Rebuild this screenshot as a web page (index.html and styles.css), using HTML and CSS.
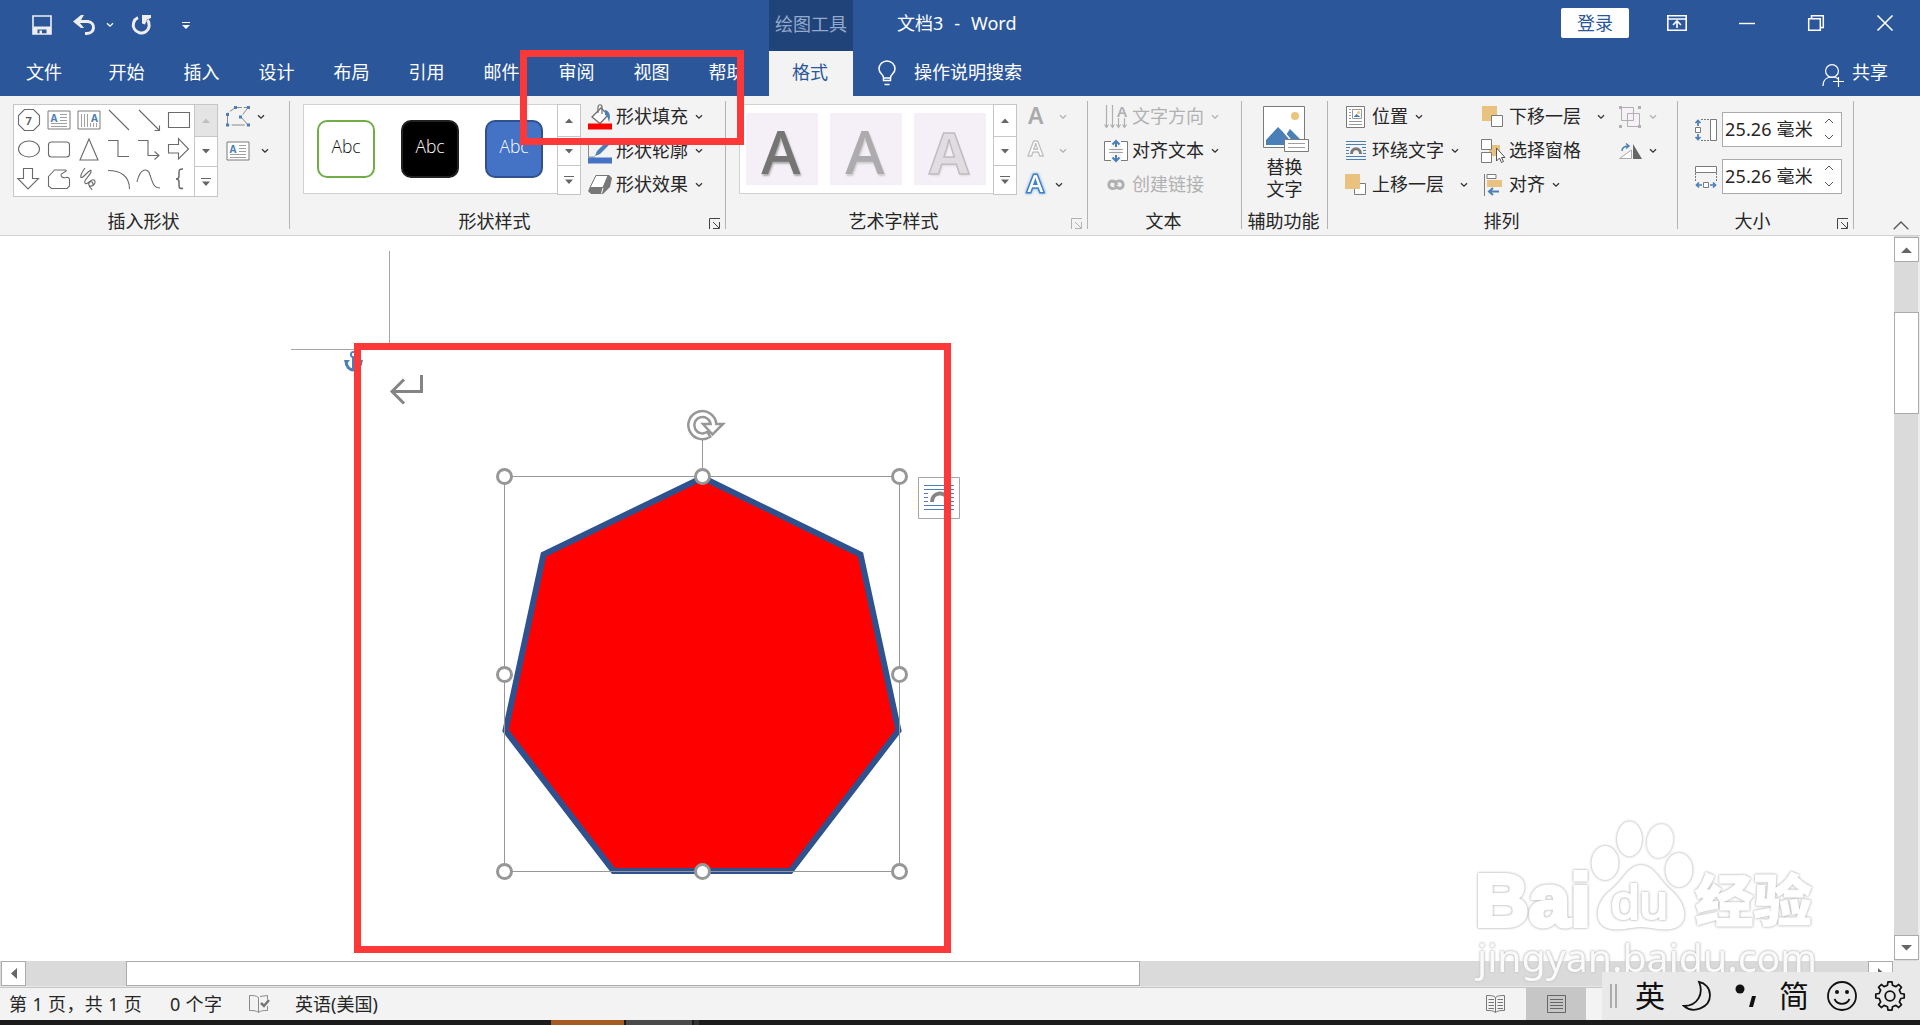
FILE: index.html
```html
<!DOCTYPE html>
<html lang="zh-CN">
<head>
<meta charset="utf-8">
<title>文档3 - Word</title>
<link rel="stylesheet" href="styles.css">
</head>
<body>
<svg class="defs" width="0" height="0">
  <symbol id="chev" viewBox="0 0 8 6"><path d="M1 1.2l3 3 3-3" fill="none" stroke="currentColor" stroke-width="1.3"/></symbol>
  <symbol id="up" viewBox="0 0 8 5"><path d="M0 5l4-4.5L8 5z" fill="currentColor"/></symbol>
  <symbol id="down" viewBox="0 0 8 5"><path d="M0 0h8L4 4.5z" fill="currentColor"/></symbol>
  <symbol id="more" viewBox="0 0 10 8"><path d="M0 0h10v1H0zM1 3.5h8L5 8z" fill="currentColor"/></symbol>
  <symbol id="launch" viewBox="0 0 12 11"><path d="M.5 11V.5H11M4 4l6 6M10.500 4v6.500H4" fill="none" stroke="currentColor"/></symbol>
  <symbol id="textbox" viewBox="0 0 24 20"><path d="M1 1h22v18H1z" fill="#fff" stroke="#7b7b7b"/><path d="M13 4.500h7M13 7.500h7M13 10.500h7M4 13.500h16M4 16.500h16" stroke="#a0a0a0"/><text x="3.500" y="11.500" class="ic-a">A</text></symbol>
</svg>
<div class="window">
  <header class="titlebar">
    <div class="quick">
      <svg class="save" width="20" height="20" viewBox="0 0 20 20"><path d="M1 1h18v18H1z" fill="none" stroke="#eee" stroke-width="1.6"/><path d="M1 11.500h18V19h-4.500v-4.500h-9V19H1z" fill="#eee"/><path d="M7.500 15.500H10V19H7.500z" fill="#eee"/></svg>
      <svg class="undo" width="23" height="20" viewBox="0 0 23 20"><path d="M3 6.500h12c8 1 7 12-1 12h-2" fill="none" stroke="#eee" stroke-width="3"/><path d="M8 0v0L0 6.500 8 13h3L6.500 7.500 11 0z" fill="#eee"/></svg>
      <svg class="undo-more" width="8" height="6"><use href="#chev"/></svg>
      <svg class="redo" width="21" height="20" viewBox="0 0 21 20"><path d="M7 2.700A8 8 0 1 0 16.500 5" fill="none" stroke="#eee" stroke-width="3"/><path d="M11 0h9v3l-4 1.500-2 5-3-1z" fill="#eee"/></svg>
      <svg class="custom" width="8" height="7" viewBox="0 0 8 7"><path d="M0 0h8v1H0zM0 3h8L4 7z" fill="#fff"/></svg>
    </div>
    <div class="context">绘图工具</div>
    <div class="doc-title"><span>文档3</span><span>-</span><span>Word</span></div>
    <div class="win">
      <span class="login">登录</span>
      <svg class="w1" width="20" height="16" viewBox="0 0 20 16"><path d="M.8.8h18.400v14.400H.8zM.8 4h18.400M10 13V6.500M6 10l4-4 4 4" fill="none" stroke="#fff" stroke-width="1.600"/></svg>
      <svg class="w2" width="16" height="16"><path d="M0 8.500h16" stroke="#fff" stroke-width="1.400"/></svg>
      <svg class="w3" width="16" height="16"><path d="M.7 3.700h11.600v11.600H.7zM3.500 3.500V.7h11.800v11.800h-3" fill="none" stroke="#fff" stroke-width="1.500"/></svg>
      <svg class="w4" width="16" height="16"><path d="M.5.5l15 15M15.500.5l-15 15" stroke="#fff" stroke-width="1.600"/></svg>
    </div>
  </header>
  <nav class="tabs">
    <span class="file">文件</span><span>开始</span><span>插入</span><span>设计</span><span>布局</span><span>引用</span><span>邮件</span><span>审阅</span><span>视图</span><span>帮助</span>
    <span class="active">格式</span>
    <svg class="bulb" width="18" height="25" viewBox="0 0 18 25"><path d="M5.500 17c0-4-4.500-4.500-4.500-9a8 8 0 0 1 16 0c0 4.500-4.500 5-4.500 9v2.500h-7zM5.500 17h7M6.500 23.500h5" fill="none" stroke="#fff" stroke-width="1.500"/></svg>
    <span class="search">操作说明搜索</span>
    <span class="share"><svg width="22" height="24" viewBox="0 0 22 24"><path d="M1 22c0-6 4-9 9-9s5 1 6 2M16.500 13v10M11 17.500h11" fill="none" stroke="#fff" stroke-width="1.200"/><circle cx="10" cy="7" r="6.400" fill="none" stroke="#fff" stroke-width="1.200"/></svg>共享</span>
  </nav>

  <section class="ribbon">
    <div class="group g1">
      <div class="body">
        <div class="shapes">
          <div class="shape-grid">
            <svg class="sh" viewBox="0 0 24 24"><path d="M7.500 1.500h9l6 6v9l-6 6h-9l-6-6v-9z"/><text x="8.500" y="16.500" class="seven">7</text></svg>
            <svg width="24" height="20"><use href="#textbox"/></svg>
            <svg width="24" height="20" viewBox="0 0 24 20"><path d="M1 1h22v18H1z" fill="#fff" stroke="#7b7b7b"/><path d="M4.500 4v13M7.500 4v13M10.500 4v13M13.500 13v4M16.500 13v4M19.500 13v4" stroke="#a0a0a0"/><text x="14" y="11.500" class="ic-a">A</text></svg>
            <svg class="sh" viewBox="0 0 24 24"><path d="M2 2l20 20"/></svg>
            <svg class="sh" viewBox="0 0 24 24"><path d="M2 2l20 20M22.500 17.500v5h-5"/></svg>
            <svg class="sh" viewBox="0 0 24 24"><path d="M1.500 4.500h21v15h-21z"/></svg>
            <svg class="sh" viewBox="0 0 24 24"><ellipse cx="12" cy="12" rx="10.500" ry="8"/></svg>
            <svg class="sh" viewBox="0 0 24 24"><rect x="1.500" y="5" width="21" height="15" rx="3"/></svg>
            <svg class="sh" viewBox="0 0 24 24"><path d="M12 2l9 21H3z"/></svg>
            <svg class="sh" viewBox="0 0 24 24"><path d="M1 3.500h10v16h11"/></svg>
            <svg class="sh" viewBox="0 0 24 24"><path d="M1 3.500h10v15h11M17.500 14.500l4.500 4-4.500 4"/></svg>
            <svg class="sh" viewBox="0 0 24 24"><path d="M1.500 7.500h10v-6l10 10.500-10 10v-6h-10z"/></svg>
            <svg class="sh" viewBox="0 0 24 24"><path d="M6.500 1.500h9v10h6L11 22 .8 11.500h5.700z"/></svg>
            <svg class="sh" viewBox="0 0 24 24"><path d="M1.500 9.500l6-6.500h11c3 1.500-4.500 2.500-4.500 5s3 3 5 2.500 3.500.5 3.500 2v6.500l-2.500 2.500h-15.500l-3-2.500z"/></svg>
            <svg class="sh" viewBox="0 0 24 24"><path d="M8 1c-6 8-5 12-1 8s8-8 7-4-8 8-6 11 6-5 9-3-1 7-4 6 0-6 2-4 1 5-2 4M12 18c0 3 3 3 3 5"/></svg>
            <svg class="sh" viewBox="0 0 24 24"><path d="M1 3.500c12 0 21.500 5 21.500 18.500"/></svg>
            <svg class="sh" viewBox="0 0 24 24"><path d="M0 15c3-14 11-15 13-7 3 9 4 13 10 13"/></svg>
            <svg class="sh brace" viewBox="0 0 24 24"><path d="M16 2c-4 0-4 1-4 4v3c0 2-1 3-3 3 2 0 3 1 3 3v3c0 3 0 3.500 4 3.500"/></svg>
          </div>
          <div class="scroll"><i class="off"><svg width="8" height="5"><use href="#up"/></svg></i><i><svg width="8" height="5"><use href="#down"/></svg></i><i><svg width="10" height="8"><use href="#more"/></svg></i></div>
        </div>
        <div class="col edit">
          <div class="row"><svg width="24" height="22" viewBox="0 0 24 22"><path d="M1.500 19V7l8-5.500H22L15 11l7 8z" fill="none" stroke="#8a8a8a" stroke-dasharray="13 2"/><path d="M8 0h3v3H8zM21 0h3v3h-3zM0 7h3v3H0zM13 9.500h3v3h-3zM0 17.500h3v3H0zM21 17.500h3v3h-3z" fill="#4a7fb8"/></svg><svg class="cv" width="8" height="6"><use href="#chev"/></svg></div>
          <div class="row"><svg width="24" height="20"><use href="#textbox"/></svg><svg class="cv far" width="8" height="6"><use href="#chev"/></svg></div>
        </div>
      </div>
      <div class="label"><span>插入形状</span></div>
    </div>
    <div class="sep"></div>
    <div class="group g2">
      <div class="body">
        <div class="gallery styles"><b class="s-green">Abc</b><b class="s-black">Abc</b><b class="s-blue">Abc</b></div>
        <div class="scroll"><i><svg width="8" height="5"><use href="#up"/></svg></i><i><svg width="8" height="5"><use href="#down"/></svg></i><i><svg width="10" height="8"><use href="#more"/></svg></i></div>
        <div class="col fills">
          <div class="row"><svg width="24" height="26" viewBox="0 0 24 26"><path d="M4 13l9-9 7 7-8 8.500z" fill="#fff" stroke="#707070" stroke-width="1.300"/><path d="M10 9V3c0-3 4-3 4 0v7" fill="none" stroke="#707070" stroke-width="1.200"/><path d="M17 6c5 1 6 6 4 12-1-3-1-6-4-7z" fill="#4a7fb8"/><path d="M0 19.500h24v6H0z" fill="red"/></svg><span>形状填充</span><svg class="cv" width="8" height="6"><use href="#chev"/></svg></div>
          <div class="row"><svg width="24" height="26" viewBox="0 0 24 26"><path d="M.5 2v17H7M.5 5H14" fill="none" stroke="#8a8a8a"/><path d="M7 18l2-5L20 2l3 3-11 11z" fill="#4a7fb8"/><path d="M0 19.500h24v6H0z" fill="#4472c4"/></svg><span>形状轮廓</span><svg class="cv" width="8" height="6"><use href="#chev"/></svg></div>
          <div class="row"><svg width="24" height="22" viewBox="0 0 24 22"><path d="M8 1h13l3 3-2 9-7 7H3l-3-3z" fill="#777"/><path d="M8 1.500h12l-5 12H2z" fill="#fff" stroke="#777"/><path d="M15 14l-1.500 5.500" stroke="#fff"/></svg><span>形状效果</span><svg class="cv" width="8" height="6"><use href="#chev"/></svg></div>
        </div>
      </div>
      <div class="label"><span>形状样式</span><svg class="launcher" width="12" height="11"><use href="#launch"/></svg></div>
    </div>
    <div class="sep"></div>
    <div class="group g3">
      <div class="body">
        <div class="gallery arts"><b class="a1">A</b><b class="a2">A</b><b class="a3">A</b></div>
        <div class="scroll"><i><svg width="8" height="5"><use href="#up"/></svg></i><i><svg width="8" height="5"><use href="#down"/></svg></i><i><svg width="10" height="8"><use href="#more"/></svg></i></div>
        <div class="col letters">
          <div class="row dim"><b class="l1">A</b><svg class="cv" width="8" height="6"><use href="#chev"/></svg></div>
          <div class="row dim"><svg class="glyph" width="17" height="24"><text x="0" y="18" class="l2">A</text></svg><svg class="cv" width="8" height="6"><use href="#chev"/></svg></div>
          <div class="row"><svg class="glyph" width="17" height="24"><text x="-.5" y="20" class="l3">A</text></svg><svg class="cv near" width="8" height="6"><use href="#chev"/></svg></div>
        </div>
      </div>
      <div class="label"><span>艺术字样式</span><svg class="launcher dim" width="12" height="11"><use href="#launch"/></svg></div>
    </div>
    <div class="sep"></div>
    <div class="group g4">
      <div class="body">
        <div class="col">
          <div class="row dim"><svg width="24" height="24" viewBox="0 0 24 24"><path d="M2.500 0v22M8.500 0v22M14.500 13v9M20.500 13v9M.5 19.500l2 3 2-3M6.500 19.500l2 3 2-3M12.500 19.500l2 3 2-3M18.500 19.500l2 3 2-3" fill="none" stroke="#b0b0b0" stroke-width="1.200"/><text x="13" y="12" class="dir-a">A</text></svg><span>文字方向</span><svg class="cv" width="8" height="6"><use href="#chev"/></svg></div>
          <div class="row"><svg width="24" height="24" viewBox="0 0 24 24"><path d="M7 2.500H.5v19H7M17 2.500h6.500v19H17" fill="#fff" stroke="#7b7b7b"/><path d="M5 10.500h14M5 13.500h14" stroke="#a0a0a0"/><path d="M12 8V2M8.500 5.500L12 2l3.500 3.500M12 16v6M8.500 18.500L12 22l3.500-3.500" fill="none" stroke="#4a7fb8" stroke-width="2"/></svg><span>对齐文本</span><svg class="cv" width="8" height="6"><use href="#chev"/></svg></div>
          <div class="row dim"><svg width="24" height="24" viewBox="0 0 24 24"><g fill="none" stroke="#b0b0b0" stroke-width="2.800"><path d="M13.500 13.500c-2 2.500-4 2-5.500 2a3.800 3.800 0 0 1 0-7.500c3 0 4 1.500 5 4M10.500 10c2-2.500 4-2 5.500-2a3.800 3.800 0 0 1 0 7.500c-3 0-4-1.500-5-4"/></g></svg><span>创建链接</span></div>
        </div>
      </div>
      <div class="label"><span>文本</span></div>
    </div>
    <div class="sep"></div>
    <div class="group g5">
      <div class="body big">
        <svg width="46" height="46" viewBox="0 0 46 46"><path d="M.5.5h41v41H.5z" fill="#fff" stroke="#7b7b7b"/><circle cx="32" cy="10" r="4" fill="#ecc57b"/><path d="M3 39V34L15 21l8 8 4-6 15 15v1z" fill="#4a7fb8"/><path d="M21 26l10 12" stroke="#fff" stroke-width="1.500"/><path d="M21.500 33.500h24v12h-24z" fill="#fff" stroke="#7b7b7b"/><path d="M25 37.500h17M25 41.500h17" stroke="#a0a0a0"/></svg>
        <span>替换<br>文字</span>
      </div>
      <div class="label"><span>辅助功能</span></div>
    </div>
    <div class="sep"></div>
    <div class="group g6">
      <div class="body">
        <div class="col c1">
          <div class="row"><svg width="22" height="24" viewBox="0 0 22 24"><path d="M1.500 1.500h18v21h-18z" fill="#fff" stroke="#7b7b7b"/><path d="M7.500 4.500h9v9h-9z" fill="#fff" stroke="#999"/><path d="M8.500 12l3-3 4 3z" fill="#4a7fb8"/><circle cx="13.500" cy="7.500" r="1.500" fill="#ecc57b"/><path d="M4 4.500h2M4 7.500h2M4 10.500h2M4 13.500h2M4 16.500h13M4 19.500h13" stroke="#999"/></svg><span>位置</span><svg class="cv" width="8" height="6"><use href="#chev"/></svg></div>
          <div class="row"><svg width="22" height="20" viewBox="0 0 22 20"><path d="M1 .5h20M1 3.500h20M1 6.500h4M17 6.500h4M1 9.500h3M18 9.500h3M1 12.500h3M18 12.500h3M1 15.500h20M1 18.500h20" stroke="#4a7fb8"/><path d="M6.500 13c0-7 9-7 9 0" fill="none" stroke="#777" stroke-width="3"/></svg><span>环绕文字</span><svg class="cv" width="8" height="6"><use href="#chev"/></svg></div>
          <div class="row"><svg width="22" height="22" viewBox="0 0 22 22"><path d="M9.500 9.500h11v11h-11z" fill="#fff" stroke="#7b7b7b"/><path d="M0 0h15v15H0z" fill="#e9c280"/></svg><span>上移一层</span><svg class="cv split" width="8" height="6"><use href="#chev"/></svg></div>
        </div>
        <div class="col c2">
          <div class="row"><svg width="22" height="22" viewBox="0 0 22 22"><path d="M1 0h15v15H1z" fill="#e9c280"/><path d="M10.500 9.500h11v11h-11z" fill="#fff" stroke="#7b7b7b"/></svg><span>下移一层</span><svg class="cv split" width="8" height="6"><use href="#chev"/></svg></div>
          <div class="row"><svg width="24" height="24" viewBox="0 0 24 24"><path d="M8 6h11v11H8z" fill="#e9c280"/><path d="M.5.5h10v10H.5zM.5 13.500h10v10H.5z" fill="#fff" stroke="#7b7b7b"/><path d="M15.500 9v13l3-3 2 4.500 2-1-2-4h3.500z" fill="#fff" stroke="#555"/></svg><span>选择窗格</span></div>
          <div class="row"><svg width="22" height="22" viewBox="0 0 22 22"><path d="M3.500 0v22M6 .5h9v4H6z" fill="#fff" stroke="#7b7b7b"/><path d="M6 6h15v7H6z" fill="#e9c280"/><path d="M18 17.500H8M12 14l-4 3.500 4 3.500" fill="none" stroke="#4a7fb8" stroke-width="2"/></svg><span>对齐</span><svg class="cv" width="8" height="6"><use href="#chev"/></svg></div>
        </div>
        <div class="col c3">
          <div class="row dim"><svg width="24" height="22" viewBox="0 0 24 22"><path d="M3.500 1.500h12v13h-12zM9.500 7.500h12v13h-12z" fill="#f5eff7" fill-opacity=".7" stroke="#b0b0b0"/><path d="M1 0h3v3H1zM20 0h3v3h-3zM1 19h3v3H1zM20 19h3v3h-3z" fill="#b0b0b0"/></svg><svg class="cv" width="8" height="6"><use href="#chev"/></svg></div>
          <div class="row"><svg width="24" height="16" viewBox="0 0 24 16"><path d="M13.500 7v8.500H1.500z" fill="#fff" stroke="#aaa"/><path d="M15 1l9 15h-9z" fill="#666"/><path d="M4 8c0-4 3-5 7-5M8 .5L11 3 8 5.500" fill="none" stroke="#4a7fb8" stroke-width="1.500"/></svg><svg class="cv" width="8" height="6"><use href="#chev"/></svg></div>
        </div>
      </div>
      <div class="label"><span>排列</span></div>
    </div>
    <div class="sep"></div>
    <div class="group g7">
      <div class="body sizes">
        <div class="size"><svg width="22" height="22" viewBox="0 0 22 22"><path d="M15.500.5h6v21h-6zM.5 8.500h5v5h-5z" fill="#fff" stroke="#7b7b7b"/><path d="M6 .5h9M6 21.500h9" stroke="#7b7b7b" stroke-dasharray="2 1"/><path d="M3 7V1M.5 4L3 1.500 5.500 4M3 15v6M.5 18L3 20.500 5.500 18" fill="none" stroke="#4a7fb8" stroke-width="1.700"/></svg><div class="input"><span>25.26 毫米</span><em><svg width="10" height="6" viewBox="0 0 10 6"><path d="M1 5l4-4 4 4" fill="none" stroke="#555"/></svg><svg width="10" height="6" viewBox="0 0 10 6"><path d="M1 1l4 4 4-4" fill="none" stroke="#555"/></svg></em></div></div>
        <div class="size"><svg width="22" height="22" viewBox="0 0 22 22"><path d="M.5.5h21v6H.5zM8.500 16.500h5v5h-5z" fill="#fff" stroke="#7b7b7b"/><path d="M.5 7v9M21.500 7v9" stroke="#7b7b7b" stroke-dasharray="2 1"/><path d="M7 19H1M4 16.500L1.500 19 4 21.500M15 19h6M18 16.500l2.500 2.500-2.500 2.500" fill="none" stroke="#4a7fb8" stroke-width="1.700"/></svg><div class="input"><span>25.26 毫米</span><em><svg width="10" height="6" viewBox="0 0 10 6"><path d="M1 5l4-4 4 4" fill="none" stroke="#555"/></svg><svg width="10" height="6" viewBox="0 0 10 6"><path d="M1 1l4 4 4-4" fill="none" stroke="#555"/></svg></em></div></div>
      </div>
      <div class="label"><span>大小</span><svg class="launcher" width="12" height="11"><use href="#launch"/></svg></div>
    </div>
    <div class="sep"></div>
    <svg class="collapse" width="16" height="9" viewBox="0 0 16 9"><path d="M.7 8.300L8 1l7.300 7.300" fill="none" stroke="#555" stroke-width="1.300"/></svg>
  </section>

  <main class="work">
    <svg class="page" width="1894" height="725" viewBox="0 236 1894 725">
      <path d="M389.500 251v98M291 349.500h98" stroke="#a6a6a6"/>
      <g fill="none" stroke="#4a7fb8"><circle cx="353.500" cy="354.500" r="2.600" stroke-width="1.800"/><path d="M353.500 357v14" stroke-width="3"/><path d="M346 361c0 12 15 12 15 0" stroke-width="3"/></g><path d="M344 360h6l-4 5zM363 360h-6l4 5z" fill="#4a7fb8"/>
      <path d="M421.500 375v16.500H392M404 379.500l-12 12 12 12" fill="none" stroke="#848484" stroke-width="3"/>
      <path d="M702.500 477.500L860.500 554.500 898.500 730.500 790.500 871H613.500L505.500 730.500 543.500 554.500z" fill="red" stroke="#2f528f" stroke-width="6"/>
      <path d="M504.500 476.500h395v395h-395zM702.500 440v36" fill="none" stroke="#979797"/>
      <path d="M710.200 436.700A14 14 0 1 1 716.300 424H723l-10.500 10.500-9.500-10.500h7.600a8.200 8.200 0 1 0-3.300 7.800z" fill="#fff" stroke="#979797" stroke-width="2.500"/>
      <g fill="#fff" stroke="#979797" stroke-width="3"><circle cx="504.500" cy="476.500" r="7"/><circle cx="702.500" cy="476.500" r="7"/><circle cx="899.500" cy="476.500" r="7"/><circle cx="504.500" cy="674.500" r="7"/><circle cx="899.500" cy="674.500" r="7"/><circle cx="504.500" cy="871.500" r="7"/><circle cx="702.500" cy="871.500" r="7"/><circle cx="899.500" cy="871.500" r="7"/></g>
      <path d="M918.500 477.500h41v41h-41z" fill="#fff" stroke="#a6a6a6"/>
      <path d="M924 485.500h30M924 489.500h30M924 493.500h4M950 493.500h4M924 497.500h4M950 497.500h4M924 501.500h4M950 501.500h4M924 505.500h30M924 509.500h30" stroke="#4a7fb8"/>
      <path d="M932 502c0-10 12-11 15-4" fill="none" stroke="#848484" stroke-width="4"/>
    </svg>
    <div class="vscroll">
      <i class="btn"><svg width="11" height="6" viewBox="0 0 8 5" preserveAspectRatio="none"><use href="#up"/></svg></i>
      <i class="thumb"></i>
      <i class="btn"><svg width="11" height="6" viewBox="0 0 8 5" preserveAspectRatio="none"><use href="#down"/></svg></i>
    </div>
  </main>
  <div class="hscroll">
    <i class="btn"><svg width="6" height="11"><path d="M6 0v11L0 5.500z" fill="#666"/></svg></i>
    <i class="thumb"></i>
    <i class="btn"><svg width="6" height="11"><path d="M0 0v11l6-5.500z" fill="#666"/></svg></i>
    <b class="corner"></b>
  </div>
  <footer class="status">
    <span class="pg">第 1 页，共 1 页</span><span class="wc">0 个字</span>
    <svg class="proof" width="21" height="18" viewBox="0 0 21 18"><path d="M9.500 2.500c-2-2-6-2-9-2v15c3 0 7 0 9 2 2-2 5-2 9-2V11M9.500 2.500v15M11 1.500l7.500-1v4" fill="none" stroke="#8a8a8a"/><path d="M12 8l3 3 5-6" fill="none" stroke="#777" stroke-width="2.500"/></svg>
    <span class="lang">英语(美国)</span>
    <div class="views">
      <svg width="20" height="18" viewBox="0 0 20 18"><path d="M9.500 2.500C8 .5 4 .5.5.5v15c3.500 0 7 0 9 2 2-2 5.500-2 9-2V.5c-3.500 0-7 0-9 2v15M2.500 4.500H8M2.500 7.500H8M2.500 10.500H8M2.500 13.500H8M11.500 4.500H17M11.500 7.500H17M11.500 10.500H17M11.500 13.500H17" fill="none" stroke="#777"/></svg>
      <div class="on"><svg width="19" height="18" viewBox="0 0 19 18"><path d="M.5.5h18v17H.5zM3 4.500h13M3 7.500h13M3 10.500h13M3 13.500h13" fill="none" stroke="#666"/></svg></div>
    </div>
  </footer>
  <div class="taskbar"><i class="t1"></i><i class="t2"></i><i class="t3"></i></div>
</div>

<svg class="watermark" width="370" height="190" viewBox="1460 810 370 190">
  <g class="wm">
    <text x="1475" y="926" class="wm-bai" textLength="116" lengthAdjust="spacingAndGlyphs">Bai</text>
    <ellipse cx="1605" cy="863" rx="13.500" ry="17"/><ellipse cx="1629.500" cy="839" rx="12.500" ry="17.500"/><ellipse cx="1660" cy="841" rx="13" ry="17" transform="rotate(12 1660 841)"/><ellipse cx="1679" cy="870" rx="13.500" ry="17"/>
    <path d="M1641 865c13 0 18 15 30 25 16 14 18 33 4 38-12 4-24-1-34-1s-22 5-34 1c-14-5-12-26 4-38 12-9 17-25 30-25z"/>
    <text x="1611" y="919" class="wm-du" textLength="57" lengthAdjust="spacingAndGlyphs">du</text>
    <text x="1695" y="921" class="wm-jy" textLength="117" lengthAdjust="spacingAndGlyphs">经验</text>
    <text x="1477" y="972" class="wm-url" textLength="340" lengthAdjust="spacingAndGlyphs">jingyan.baidu.com</text>
  </g>
</svg>

<div class="ime">
  <svg class="grip" width="8" height="24"><path d="M1 0v24M6 0v24" stroke="#999" stroke-width="1.500"/></svg>
  <span>英</span>
  <svg class="moon" width="30" height="32" viewBox="0 0 30 32"><path d="M17 2c5 11-1 24-15 24 9 8 26 2 26-11 0-7-5-12-11-13z" fill="none" stroke="#111" stroke-width="1.800"/></svg>
  <svg class="punct" width="22" height="24" viewBox="0 0 22 24"><circle cx="5" cy="5" r="4.500" fill="#111"/><path d="M17 12h4l-3 11h-4z" fill="#111"/></svg>
  <span class="jian">简</span>
  <svg class="smile" width="32" height="32" viewBox="0 0 32 32"><circle cx="16" cy="16" r="14" fill="none" stroke="#111" stroke-width="1.800"/><circle cx="11" cy="12" r="2" fill="#111"/><circle cx="21" cy="12" r="2" fill="#111"/><path d="M8.500 19c3 6.500 12 6.500 15 0" fill="none" stroke="#111" stroke-width="1.800"/></svg>
  <svg class="gear" width="32" height="32" viewBox="0 0 32 32"><path d="M13.500 5.200L14 1.800h4l.5 3.400 3.400 1.400 2.800-2.100 2.800 2.800-2.100 2.800 1.400 3.400 3.400.5v4l-3.400.5-1.400 3.400 2.100 2.800-2.800 2.800-2.800-2.100-3.400 1.400-.5 3.400h-4l-.5-3.400-3.400-1.400-2.800 2.100-2.800-2.800 2.100-2.800-1.400-3.400-3.400-.5v-4l3.400-.5 1.400-3.400-2.100-2.800 2.800-2.800 2.800 2.100z" fill="none" stroke="#111" stroke-width="1.700" stroke-linejoin="round"/><circle cx="16" cy="16" r="4.800" fill="none" stroke="#111" stroke-width="1.800"/></svg>
</div>
<div class="mark mark-ribbon"></div>
<div class="mark mark-canvas"></div>
</body>
</html>
```
FILE: styles.css
```css
* { box-sizing: border-box; }
body { margin: 0; overflow: hidden; font: 18px/34px "Noto Sans", "Noto Sans CJK SC", sans-serif; color: #262626; }
svg { display: block; flex: none; overflow: visible; }
i, em, b { font-style: normal; font-weight: 400; }
.defs { position: absolute; }
.window { width: 1920px; height: 1025px; display: flex; flex-direction: column; background: #fff; white-space: nowrap; }

/* title bar */
.titlebar { height: 51px; display: flex; background: #2b579a; color: #fff; line-height: 48px; }
.quick { width: 769px; display: flex; align-items: flex-start; padding: 15px 0 0 32px; }
.undo { margin-left: 21px; }
.undo-more { margin: 7px 0 0 10px; }
.redo { margin-left: 17px; }
.custom { margin: 7px 0 0 30px; }
.context { width: 84px; background: #204379; color: #94a9cb; text-align: center; }
.doc-title { padding-left: 44px; line-height: 46px; width: 708px; display: flex; gap: 11px; }
.win { display: flex; padding-top: 8px; }
.login { width: 68px; height: 30px; border-radius: 2px; background: #fff; color: #2b579a; line-height: 31px; text-align: center; }
.w1 { margin: 7px 0 0 38px; }
.w2 { margin: 7px 0 0 52px; }
.w3 { margin: 7px 0 0 53px; }
.w4 { margin: 7px 0 0 53px; }

/* ribbon tabs */
.tabs { height: 45px; display: flex; background: #2b579a; color: #fff; line-height: 43px; }
.tabs > span { width: 75px; text-align: center; }
.tabs > .file { width: 89px; padding-right: 1px; }
.tabs > .active { width: 84px; margin-left: 5px; padding-right: 2px; background: #f3f3f3; color: #2b579a; }
.bulb { margin: 10px 0 0 25px; }
.tabs > .search { width: 110px; margin-left: 17px; }
.tabs > .share { width: auto; margin: 0 32px 0 auto; display: flex; gap: 8px; }
.share svg { margin-top: 13px; }

/* ribbon */
.ribbon { height: 140px; display: flex; background: #f3f3f3; border-bottom: 1px solid #d2d2d2; }
.sep { width: 1px; margin: 5px 0 6px; background: #b4b4b4; }
.group { display: flex; flex-direction: column; }
.g1 { width: 289px; } .g2 { width: 435px; } .g3 { width: 361px; } .g4 { width: 153px; }
.g5 { width: 85px; } .g6 { width: 349px; } .g7 { width: 175px; }
.body { height: 112px; display: flex; }
.label { height: 27px; line-height: 27px; display: flex; }
.label span { flex: 1; text-align: center; padding-right: 2px; }
.launcher { margin: 10px 4px 0 8px; color: #444; }
.dim { color: #b1b1b1; }
.col { padding-top: 4px; }
.row { height: 34px; display: flex; align-items: center; }
.row span { margin-top: -2px; }
.cv { margin-left: 7px; color: #333; }
.dim .cv { color: #b1b1b1; }
.collapse { margin: 125px 0 0 39px; }

.shapes { margin: 8px 0 0 13px; width: 205px; height: 93px; border: 1px solid #c6c6c6; background: #fff; display: flex; }
.shape-grid { display: grid; grid-template-columns: repeat(6, 30px); grid-auto-rows: 29.5px; width: 181px; place-items: center; align-content: start; }
.sh { width: 24px; height: 24px; fill: none; stroke: #6a6a6a; stroke-width: 1.1; }
.brace { stroke-width: 1.5; }
.seven { font: 11px "Noto Sans"; fill: #555; stroke: none; font-weight: 600; }
.ic-a { font: bold 10px "Noto Sans"; fill: #4a7fb8; }
.dir-a { font: 600 15px "Noto Sans"; fill: #b0b0b0; }
.scroll { width: 24px; height: 91px; margin-top: 8px; border: 1px solid #c6c6c6; background: #fff; color: #666; display: flex; flex-direction: column; }
.scroll i { flex: 1; display: flex; align-items: center; justify-content: center; border-bottom: 1px solid #c6c6c6; }
.scroll i:first-child { flex: 0 0 32px; }
.scroll i:last-child { border-bottom: 0; }
.scroll .off { background: #e4e4e4; color: #c0c0c0; }
.shapes .scroll { margin: -1px -1px 0 0; height: 93px; }
.edit { margin-left: 8px; }
.edit .cv.far { margin-left: 11px; }

.gallery { height: 90px; margin: 8px -1px 0 13px; width: 255px; border: 1px solid #d2d2d2; background: #fff; display: flex; }
.styles { padding: 15px 13px; gap: 26px; }
.styles b { width: 58px; height: 58px; border-radius: 10px; text-align: center; line-height: 48px; font: 300 17.500px/48px "Open Sans"; border: 2px solid; }
.styles .s-green { border-color: #70ad47; color: #111; }
.styles .s-black { background: #000; color: #fff; border-color: #222; }
.styles .s-blue { background: #4472c4; color: #fff; border-color: #2f528f; }
.fills { margin-left: 7px; }
.fills .row span { margin-left: 4px; }
.arts { padding: 8px 6px; gap: 12px; }
.arts b { width: 72px; height: 72px; background: #f5f0f7; font: 500 60px/77px "Noto Sans"; text-align: center; padding-right: 2px; }
.a1 { color: #757575; text-shadow: 1px 2px 2px #aaa; }
.a2 { color: #adabad; text-shadow: 1px 2px 2px #ccc; }
.arts .a3 { font-weight: 700; font-size: 58px; color: #e0dce1; -webkit-text-stroke: 1.5px #bfbdc0; text-shadow: 1px 2px 2px #ddd; }
.letters { margin-left: 11px; }
.letters b { width: 17px; font-size: 23px; line-height: 30px; margin-top: -4px; }
.letters .l1 { color: #aaa; font-weight: 600; }
.glyph { margin-top: -3px; }
.l2 { font: 700 22px "Noto Sans"; fill: #fff; stroke: #b4b4b4; stroke-width: 1; }
.l3 { font: 500 24px "Noto Sans"; fill: #fff; stroke: #3f80c6; stroke-width: 3; paint-order: stroke; filter: drop-shadow(0 0 1.5px #6ea5df); }
.letters .cv { margin-left: 14px; }
.letters .cv.near { margin-left: 10px; }
.g4 .col { margin-left: 16px; }
.g4 .row span { margin-left: 4px; }
.big { flex-direction: column; align-items: center; padding-top: 10px; line-height: 22px; }
.big svg { margin-left: 2px; }
.big span { margin-top: 4px; }
.c1 { margin-left: 17px; width: 136px; }
.c1 .row span { margin-left: 5px; }
.c2 { width: 137px; }
.c2 .row span { margin-left: 6px; }
.c2 .row:nth-child(2) span { margin-left: 4px; }
.cv.split { margin-left: 16px; }
.sizes { flex-direction: column; padding: 16px 0 0 17px; gap: 12px; }
.size { display: flex; align-items: center; gap: 5px; }
.input { width: 120px; height: 35px; border: 1px solid #ababab; background: #fff; padding: 0 7px 0 2px; display: flex; justify-content: space-between; line-height: 32px; }
.input span { letter-spacing: .15px; }
.input em { display: flex; flex-direction: column; gap: 10px; padding-top: 5px; }

/* document */
.work { height: 725px; display: flex; }
.vscroll { width: 26px; background: #dadada; border-right: 2px solid #eee; padding-top: 1px; display: flex; flex-direction: column; }
.btn { width: 25px; height: 25px; flex: none; border: 1px solid #ababab; background: #fff; color: #666; display: flex; align-items: center; justify-content: center; }
.vscroll .thumb { height: 102px; width: 25px; margin: 50px 0 521px; border: 1px solid #ababab; background: #fff; }
.hscroll { height: 26px; background: #dadada; display: flex; padding-left: 1px; border-bottom: 1px solid #e6e6e6; }
.hscroll .thumb { width: 1014px; height: 25px; margin: 0 728px 0 100px; border: 1px solid #ababab; background: #fff; }
.corner { flex: 1; background: #e9e9e9; }
.status { height: 33px; display: flex; align-items: center; background: #f3f3f3; border-top: 1px solid #c6c6c6; line-height: 32px; }
.pg { width: 133px; margin-left: 9px; letter-spacing: .35px; }
.wc { width: 53px; margin-left: 28px; letter-spacing: .3px; }
.proof { margin-left: 26px; }
.lang { margin-left: 25px; }
.views { margin-left: auto; margin-right: 334px; height: 100%; display: flex; align-items: center; gap: 20px; }
.on { width: 60px; height: 100%; background: #c6c6c6; display: flex; align-items: center; justify-content: center; }
.taskbar { height: 5px; background: #1b1b1b; display: flex; padding-left: 551px; gap: 2px; }
.t1 { width: 73px; background: #a65b22; }
.t2 { width: 66px; background: #4a4a4a; }
.t3 { width: 5px; background: #333; }

/* layers above the window */
.watermark { position: absolute; left: 1460px; top: 810px; }
.wm { fill: #fff; }
.wm > * { filter: drop-shadow(0 0 1px #b4b4b4) drop-shadow(0 0 1px #ddd); }
.wm-bai { font: bold 75px "Liberation Sans"; stroke: #fff; stroke-width: 4; }
.wm-du { font: 48px "Liberation Sans"; stroke: #fff; stroke-width: 2; }
.wm-jy { font: 900 56px "Noto Sans CJK SC"; stroke: #fff; stroke-width: 1; }
.wm-url { font: 38px "Noto Sans"; fill: #fafafa; }
.ime { position: absolute; left: 1602px; top: 972px; width: 318px; height: 48px; background: #e9e9e9; display: flex; align-items: center; font-size: 30px; line-height: 46px; color: #111; }
.grip { margin-left: 8px; }
.ime span { margin-left: 17px; width: 30px; }
.moon { margin-left: 17px; }
.punct { margin-left: 23px; }
.ime .jian { margin-left: 22px; }
.smile { margin-left: 17px; }
.gear { margin-left: 16px; }
.mark { position: absolute; border: 7px solid #fc3838; }
.mark-ribbon { left: 520px; top: 50px; width: 224px; height: 95px; }
.mark-canvas { left: 354px; top: 343px; width: 597px; height: 610px; }
```
